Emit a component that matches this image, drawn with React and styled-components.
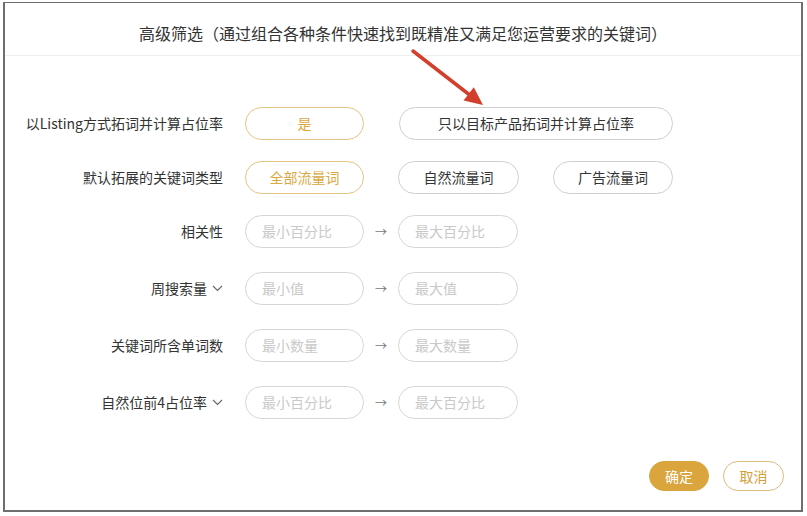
import React, { useState } from 'react'
import styled, { createGlobalStyle } from 'styled-components'

const GlobalStyle = createGlobalStyle`
  * { box-sizing: border-box; }
  body {
    margin: 0;
    background: #fff;
    font-family: "Noto Sans CJK SC", "Noto Sans", sans-serif;
    color: #333;
  }
`

const Page = styled.div`
  padding: 2px 4px 4px 3px;
`

const Modal = styled.div`
  position: relative;
  width: 800px;
  height: 510px;
  border: 2px solid #6e6e6e;
  border-top-width: 1px;
  background: #fff;
  display: flex;
  flex-direction: column;
`

const Header = styled.div`
  height: 53px;
  border-bottom: 1px solid #efefef;
  display: flex;
  align-items: center;
  justify-content: center;
  padding-top: 7px;
`

const Title = styled.h1`
  margin: 0;
  font-size: 16px;
  font-weight: 400;
  color: #333;
`

const Body = styled.div`
  flex: 1;
  padding-top: 51px;
  display: flex;
  flex-direction: column;
`

const Row = styled.div`
  display: flex;
  align-items: center;
  height: 32px;
  margin-top: ${p => p.$gap ?? 0}px;
`

const Label = styled.div`
  width: 218px;
  margin-right: 22px;
  font-size: 14px;
  color: #333;
  display: flex;
  justify-content: flex-end;
  align-items: center;
  gap: 5px;
`

const Controls = styled.div`
  display: flex;
  align-items: center;
  gap: ${p => p.$gap ?? 35}px;
`

const Option = styled.button`
  width: ${p => p.$w}px;
  height: 33px;
  border-radius: 17px;
  background: #fff;
  border: 1px solid ${p => (p.$active ? '#e3c47f' : '#cfcfcf')};
  color: ${p => (p.$active ? '#daa83f' : '#333')};
  font-family: inherit;
  font-size: 14px;
  cursor: pointer;
  padding: 0;
`

const RangeInput = styled.input`
  width: ${p => p.$w || 119}px;
  height: 33px;
  border-radius: 17px;
  border: 1px solid #d6d6d6;
  padding: 0 16px;
  font-family: inherit;
  font-size: 14px;
  color: #333;
  outline: none;
  &::placeholder { color: #c9c9c9; }
`

const ArrowSign = styled.span`
  width: 34px;
  flex-shrink: 0;
  text-align: center;
  font-size: 12px;
  color: #777;
`

const Footer = styled.div`
  display: flex;
  justify-content: flex-end;
  gap: 14px;
  padding: 0 17px 19px 0;
`

const FooterButton = styled.button`
  width: ${p => p.$w}px;
  height: 30px;
  border-radius: 15px;
  font-family: inherit;
  font-size: 14px;
  cursor: pointer;
  padding: 0;
  background: ${p => (p.$primary ? '#d9a53c' : '#fff')};
  color: ${p => (p.$primary ? '#fff' : '#d39f3a')};
  border: 1px solid ${p => (p.$primary ? '#d9a53c' : '#dcbc7a')};
`

const Pointer = styled.svg`
  position: absolute;
  left: 397px;
  top: 38px;
  pointer-events: none;
`

const Chevron = () => (
  <svg width="11" height="7" viewBox="0 0 11 7">
    <path d="M1 1l4.5 4.5L10 1" fill="none" stroke="#666" strokeWidth="1.1" />
  </svg>
)

const ranges = [
  { label: '相关性', min: '最小百分比', max: '最大百分比', gap: 22 },
  { label: '周搜索量', min: '最小值', max: '最大值', gap: 25, menu: true },
  { label: '关键词所含单词数', min: '最小数量', max: '最大数量', gap: 25 },
  { label: '自然位前4占位率', min: '最小百分比', max: '最大百分比', gap: 25, menu: true },
]

const App = () => {
  const [listing, setListing] = useState('yes')
  const [type, setType] = useState('all')

  return (
    <Page>
      <GlobalStyle />
      <Modal>
        <Header>
          <Title>高级筛选（通过组合各种条件快速找到既精准又满足您运营要求的关键词）</Title>
        </Header>
        <Body>
          <Row>
            <Label>以Listing方式拓词并计算占位率</Label>
            <Controls>
              <Option $w={119} $active={listing === 'yes'} onClick={() => setListing('yes')}>是</Option>
              <Option $w={274} $active={listing === 'target'} onClick={() => setListing('target')}>只以目标产品拓词并计算占位率</Option>
            </Controls>
          </Row>
          <Row $gap={22}>
            <Label>默认拓展的关键词类型</Label>
            <Controls $gap={34}>
              <Option $w={119} $active={type === 'all'} onClick={() => setType('all')}>全部流量词</Option>
              <Option $w={121} $active={type === 'organic'} onClick={() => setType('organic')}>自然流量词</Option>
              <Option $w={120} $active={type === 'ad'} onClick={() => setType('ad')}>广告流量词</Option>
            </Controls>
          </Row>
          {ranges.map(r => (
            <Row key={r.label} $gap={r.gap}>
              <Label>
                {r.label}
                {r.menu && <Chevron />}
              </Label>
              <Controls $gap={0}>
                <RangeInput placeholder={r.min} />
                <ArrowSign>→</ArrowSign>
                <RangeInput $w={120} placeholder={r.max} />
              </Controls>
            </Row>
          ))}
        </Body>
        <Footer>
          <FooterButton $primary $w={60}>确定</FooterButton>
          <FooterButton $w={61}>取消</FooterButton>
        </Footer>
        <Pointer width="90" height="72" viewBox="397 38 90 72">
          <line x1="408" y1="48" x2="466" y2="93" stroke="#d23f2c" strokeWidth="3.5" strokeLinecap="round" />
          <polygon points="478,102 458.5,97.5 468.8,84.2" fill="#d23f2c" />
        </Pointer>
      </Modal>
    </Page>
  )
}

export default App
